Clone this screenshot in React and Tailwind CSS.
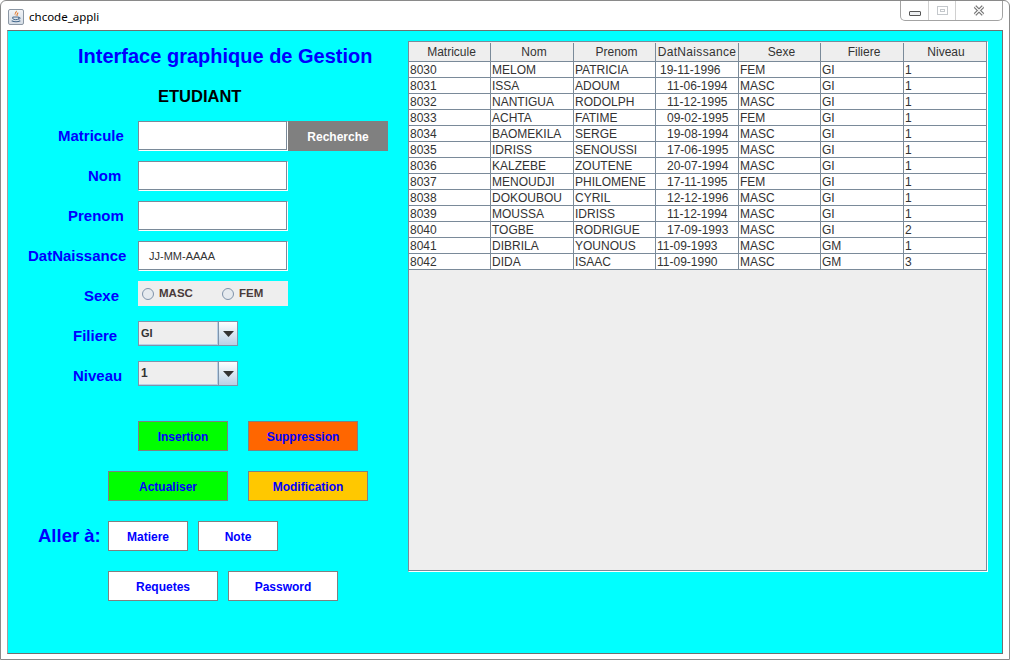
import React from "react";

const columns = [
  { name: "Matricule", w: "w-[82px]", head: "pl-[4px]" },
  { name: "Nom", w: "w-[83px]", head: "pl-[4px]" },
  { name: "Prenom", w: "w-[82px]", head: "pl-[4px]" },
  { name: "DatNaissance", w: "w-[83px]", head: "tracking-[0.33px]" },
  { name: "Sexe", w: "w-[82px]", head: "pl-[4px]" },
  { name: "Filiere", w: "w-[83px]", head: "pl-[4px]" },
  { name: "Niveau", w: "w-[82px]", head: "pl-[3px]" },
];

const rows = [
  ["8030", "MELOM", "PATRICIA", "19-11-1996", "FEM", "GI", "1", "pl-[4px]"],
  ["8031", "ISSA", "ADOUM", "11-06-1994", "MASC", "GI", "1", "pl-[11px]"],
  ["8032", "NANTIGUA", "RODOLPH", "11-12-1995", "MASC", "GI", "1", "pl-[11px]"],
  ["8033", "ACHTA", "FATIME", "09-02-1995", "FEM", "GI", "1", "pl-[11px]"],
  ["8034", "BAOMEKILA", "SERGE", "19-08-1994", "MASC", "GI", "1", "pl-[11px]"],
  ["8035", "IDRISS", "SENOUSSI", "17-06-1995", "MASC", "GI", "1", "pl-[11px]"],
  ["8036", "KALZEBE", "ZOUTENE", "20-07-1994", "MASC", "GI", "1", "pl-[11px]"],
  ["8037", "MENOUDJI", "PHILOMENE", "17-11-1995", "FEM", "GI", "1", "pl-[11px]"],
  ["8038", "DOKOUBOU", "CYRIL", "12-12-1996", "MASC", "GI", "1", "pl-[11px]"],
  ["8039", "MOUSSA", "IDRISS", "11-12-1994", "MASC", "GI", "1", "pl-[11px]"],
  ["8040", "TOGBE", "RODRIGUE", "17-09-1993", "MASC", "GI", "2", "pl-[11px]"],
  ["8041", "DIBRILA", "YOUNOUS", "11-09-1993", "MASC", "GM", "1", "pl-[1px]"],
  ["8042", "DIDA", "ISAAC", "11-09-1990", "MASC", "GM", "3", "pl-[1px]"],
];

function JavaIcon() {
  return (
    <div className="w-[16px] h-[16px] rounded-[2px] border border-[#8a96a3] bg-gradient-to-b from-[#f2f4f7] to-[#d5dde6] flex items-center justify-center">
      <svg width="12" height="13" viewBox="0 0 11 12">
        <path d="M6 0.5 C7 2.5 4 3 5 5.5 C3.5 4 4.5 2.5 6 0.5Z" fill="#e2701c" />
        <path d="M7.5 2.5 C6.5 3.5 6 4 6.5 5.5" stroke="#e2701c" fill="none" />
        <path d="M2.5 6.5 H8 V8 C7 9.2 3.5 9.2 2.5 8Z M8 6.8 C10 6.5 10 8.5 7.5 8.5" stroke="#44688c" strokeWidth="0.9" fill="none" />
        <path d="M1.5 10 C3.5 11.2 7.5 11.2 9.5 10" stroke="#44688c" fill="none" />
      </svg>
    </div>
  );
}

function WindowButtons() {
  return (
    <div className="flex h-[20px] w-[103px] border border-t-0 border-[#a3a3a3] rounded-b-[5px] bg-white">
      <div className="w-[28px] flex items-center justify-center border-r border-[#d0d0d0]">
        <div className="w-[12px] h-[5px] mt-[6px] border border-[#555] bg-[#eef0f2] rounded-[1px]" />
      </div>
      <div className="w-[27px] flex items-center justify-center border-r border-[#d0d0d0]">
        <div className="w-[11px] h-[9px] border border-[#c4c8cc] flex items-center justify-center">
          <div className="w-[5px] h-[3px] border border-[#c4c8cc]" />
        </div>
      </div>
      <div className="flex-1 flex items-center justify-center">
        <svg width="12" height="11" viewBox="0 0 12 11">
          <path d="M2 1.5 L10 9.5 M10 1.5 L2 9.5" stroke="#666" strokeWidth="3.4" />
          <path d="M2 1.5 L10 9.5 M10 1.5 L2 9.5" stroke="#f4f4f4" strokeWidth="1.6" />
        </svg>
      </div>
    </div>
  );
}

function FieldLabel({ text, className }) {
  return (
    <div className="w-[130px] h-[20px] shrink-0">
      <span className={`block w-fit text-[15px] leading-[20px] font-bold text-[#0000ff] whitespace-nowrap ${className}`}>{text}</span>
    </div>
  );
}

function TextField({ value }) {
  return (
    <div className="w-[150px] h-[30px] bg-white border border-[#7a8a99] border-r-white border-b-white shadow-[inset_-1px_-1px_0_#7a8a99] flex items-center pl-[10px] text-[11px] text-[#333]">
      {value}
    </div>
  );
}

function Radio({ label, className }) {
  return (
    <div className={`flex items-center gap-[5px] ${className}`}>
      <div className="w-[12px] h-[12px] rounded-full border border-[#7f93aa] bg-[#e6eaee]" />
      <span className="text-[11.5px] font-bold text-[#4a3a3a]">{label}</span>
    </div>
  );
}

function ComboBox({ value, size }) {
  return (
    <div className="w-[100px] h-[25px] flex border border-[#7f93aa]">
      <div className={`flex-1 bg-[#eeeeee] border-r border-b border-[#b8cfe5] flex items-center pl-[2px] font-bold text-[#333] ${size}`}>
        {value}
      </div>
      <div className="w-[19px] border-l border-[#7f93aa] bg-gradient-to-b from-white to-[#b8cfe5] flex items-center justify-center">
        <svg width="11" height="6" viewBox="0 0 11 6">
          <path d="M0 0 H11 L5.5 6Z" fill="#333" />
        </svg>
      </div>
    </div>
  );
}

function ActionButton({ label, className }) {
  return (
    <button className={`h-[30px] pt-[2px] border border-[#808080] text-[12px] font-bold text-[#0000ff] ${className}`}>
      {label}
    </button>
  );
}

function StudentForm() {
  return (
    <div className="w-[400px] shrink-0 flex flex-col">
      <h1 className="h-[24px] mt-[13px] pl-[70px] text-[20px] leading-[24px] font-bold text-[#0000ff] whitespace-nowrap">
        Interface graphique de Gestion
      </h1>
      <div className="mt-[19px] pl-[150px] h-[18px] text-[16.5px] leading-[18px] font-bold text-black">ETUDIANT</div>

      <div className="mt-[16px] flex items-center">
        <FieldLabel text="Matricule" className="ml-[50px]" />
        <TextField />
        <button className="w-[100px] h-[30px] pt-[2px] bg-[#808080] text-white text-[12px] font-bold">Recherche</button>
      </div>
      <div className="mt-[10px] flex items-center">
        <FieldLabel text="Nom" className="ml-[80px]" />
        <TextField />
      </div>
      <div className="mt-[10px] flex items-center">
        <FieldLabel text="Prenom" className="ml-[60px]" />
        <TextField />
      </div>
      <div className="mt-[10px] flex items-center">
        <FieldLabel text="DatNaissance" className="ml-[20px]" />
        <TextField value="JJ-MM-AAAA" />
      </div>
      <div className="mt-[10px] flex items-center">
        <FieldLabel text="Sexe" className="ml-[76px] mt-[2px]" />
        <div className="w-[150px] h-[25px] bg-[#eeeeee] flex items-center pl-[4px]">
          <Radio label="MASC" className="w-[80px]" />
          <Radio label="FEM" />
        </div>
      </div>
      <div className="mt-[15px] flex items-center">
        <FieldLabel text="Filiere" className="ml-[65px] mt-[2px]" />
        <ComboBox value="GI" size="text-[11px]" />
      </div>
      <div className="mt-[15px] flex items-center">
        <FieldLabel text="Niveau" className="ml-[65px] mt-[2px]" />
        <ComboBox value="1" size="text-[12px]" />
      </div>

      <div className="mt-[35px] flex gap-[20px] pl-[130px]">
        <ActionButton label="Insertion" className="w-[90px] bg-[#00ff00]" />
        <ActionButton label="Suppression" className="w-[110px] bg-[#ff6600]" />
      </div>
      <div className="mt-[20px] flex gap-[20px] pl-[100px]">
        <ActionButton label="Actualiser" className="w-[120px] bg-[#00ff00]" />
        <ActionButton label="Modification" className="w-[120px] bg-[#ffc800]" />
      </div>
      <div className="mt-[20px] flex items-center">
        <div className="w-[100px] pl-[30px] text-[18.5px] font-bold text-[#0000ff] whitespace-nowrap">Aller à:</div>
        <ActionButton label="Matiere" className="w-[80px] bg-white" />
        <ActionButton label="Note" className="w-[80px] ml-[10px] bg-white" />
      </div>
      <div className="mt-[20px] flex gap-[10px] pl-[100px]">
        <ActionButton label="Requetes" className="w-[110px] bg-white" />
        <ActionButton label="Password" className="w-[110px] bg-white" />
      </div>
    </div>
  );
}

function StudentTable() {
  return (
    <div className="mt-[10px] w-[580px] h-[531px] border border-[#7a8a99] border-r-white border-b-white shadow-[inset_-1px_-1px_0_#7a8a99] bg-[#eeeeee] flex flex-col text-[12px] text-[#333]">
      <div className="flex h-[20px] w-[577px] pt-[1px] border-b border-[#7a8a99]">
        {columns.map((c, i) => (
          <div
            key={c.name}
            className={`${i === 6 ? "w-[81px]" : `${c.w} border-r border-[#7a8a99]`} ${c.head} text-center leading-[19px] whitespace-nowrap`}
          >
            {c.name}
          </div>
        ))}
      </div>
      {rows.map((r) => (
        <div key={r[0]} className="flex h-[16px] w-[577px] bg-white border-b border-[#7a8a99] leading-[15px]">
          {columns.map((c, i) => (
            <div
              key={c.name}
              className={`${i === 6 ? "w-[81px]" : `${c.w} border-r border-[#7a8a99]`} pt-[1px] whitespace-nowrap overflow-hidden ${i === 3 ? r[7] : "pl-[1px]"}`}
            >
              {r[i]}
            </div>
          ))}
        </div>
      ))}
    </div>
  );
}

export default function App() {
  return (
    <div className="w-[1010px] h-[660px] bg-white border border-[#8a8a8a] rounded-t-[6px] flex flex-col overflow-hidden font-['Liberation_Sans',Arial,sans-serif]">
      <div className="h-[29px] shrink-0 flex items-start justify-between pl-[7px] pr-[6px]">
        <div className="flex items-center gap-[5px] mt-[7px]">
          <JavaIcon />
          <span className="text-[11.5px] text-black font-['Noto_Sans',sans-serif]">chcode_appli</span>
        </div>
        <WindowButtons />
      </div>
      <div className="ml-[6px] w-[996px] h-[624px] bg-[#00ffff] border border-[#707070] border-l-[#a0a0a0] flex">
        <StudentForm />
        <StudentTable />
      </div>
    </div>
  );
}
